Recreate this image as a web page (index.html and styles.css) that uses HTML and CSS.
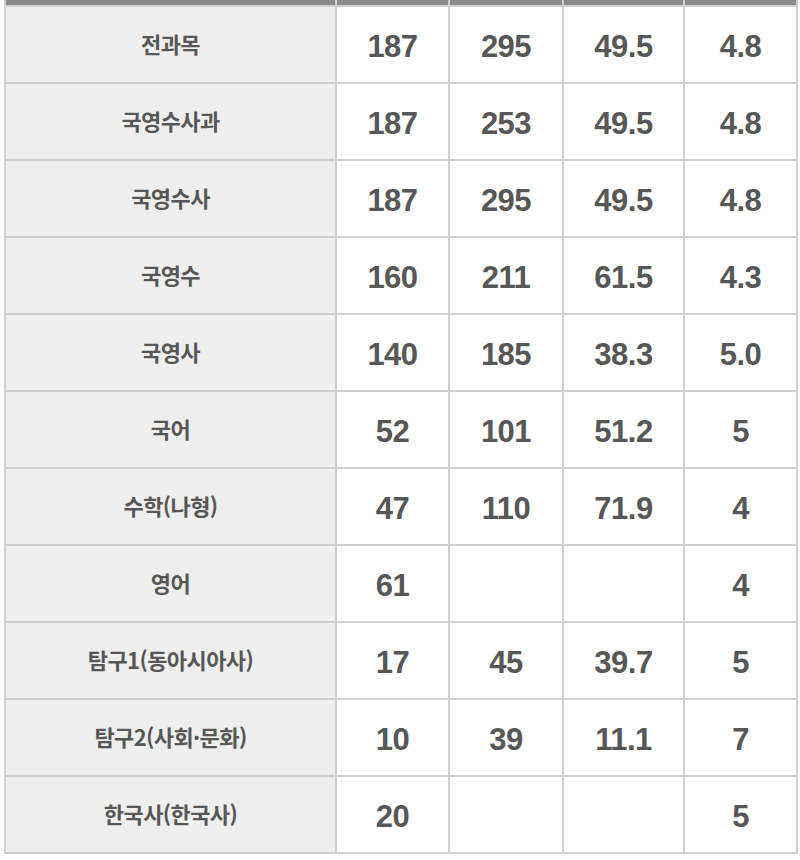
FILE: index.html
```html
<!DOCTYPE html>
<html lang="ko">
<head>
<meta charset="utf-8">
<title>성적표</title>
<link rel="stylesheet" href="styles.css">
</head>
<body>
<div class="grid">
  <div class="head"></div><div class="head"></div><div class="head"></div><div class="head"></div><div class="head"></div>

  <div class="label">전과목</div><div class="num">187</div><div class="num">295</div><div class="num">49.5</div><div class="num">4.8</div>
  <div class="label">국영수사과</div><div class="num">187</div><div class="num">253</div><div class="num">49.5</div><div class="num">4.8</div>
  <div class="label">국영수사</div><div class="num">187</div><div class="num">295</div><div class="num">49.5</div><div class="num">4.8</div>
  <div class="label">국영수</div><div class="num">160</div><div class="num">211</div><div class="num">61.5</div><div class="num">4.3</div>
  <div class="label">국영사</div><div class="num">140</div><div class="num">185</div><div class="num">38.3</div><div class="num">5.0</div>
  <div class="label">국어</div><div class="num">52</div><div class="num">101</div><div class="num">51.2</div><div class="num">5</div>
  <div class="label">수학(나형)</div><div class="num">47</div><div class="num">110</div><div class="num">71.9</div><div class="num">4</div>
  <div class="label">영어</div><div class="num">61</div><div class="num"></div><div class="num"></div><div class="num">4</div>
  <div class="label">탐구1(동아시아사)</div><div class="num">17</div><div class="num">45</div><div class="num">39.7</div><div class="num">5</div>
  <div class="label">탐구2(사회·문화)</div><div class="num">10</div><div class="num">39</div><div class="num">11.1</div><div class="num">7</div>
  <div class="label">한국사(한국사)</div><div class="num">20</div><div class="num"></div><div class="num"></div><div class="num">5</div>
</div>
</body>
</html>
```

FILE: styles.css
```css
html, body {
  margin: 0;
  padding: 0;
  background: #ffffff;
}

.grid {
  margin-left: 4px;
  width: 794px;
  box-sizing: border-box;
  padding: 0 2px 2px 2px;
  background: #cfcfcf;
  display: grid;
  grid-template-columns: 329px 111px 112px 119px 111px;
  grid-template-rows: 5px repeat(11, 75px);
  gap: 2px;
}

.head {
  background: #8a8a8a;
}

.label,
.num {
  display: flex;
  align-items: center;
  justify-content: center;
  box-sizing: border-box;
  color: #575757;
}

.label {
  background: #efefef;
  font-family: "Noto Sans CJK KR", "Noto Sans", sans-serif;
  font-weight: 700;
  font-size: 22px;
  letter-spacing: -0.6px;
  padding-bottom: 4px;
}

.num {
  background: #ffffff;
  font-family: "Liberation Sans", Arial, sans-serif;
  font-weight: bold;
  font-size: 31px;
  letter-spacing: -0.5px;
  padding-top: 4px;
}
```
